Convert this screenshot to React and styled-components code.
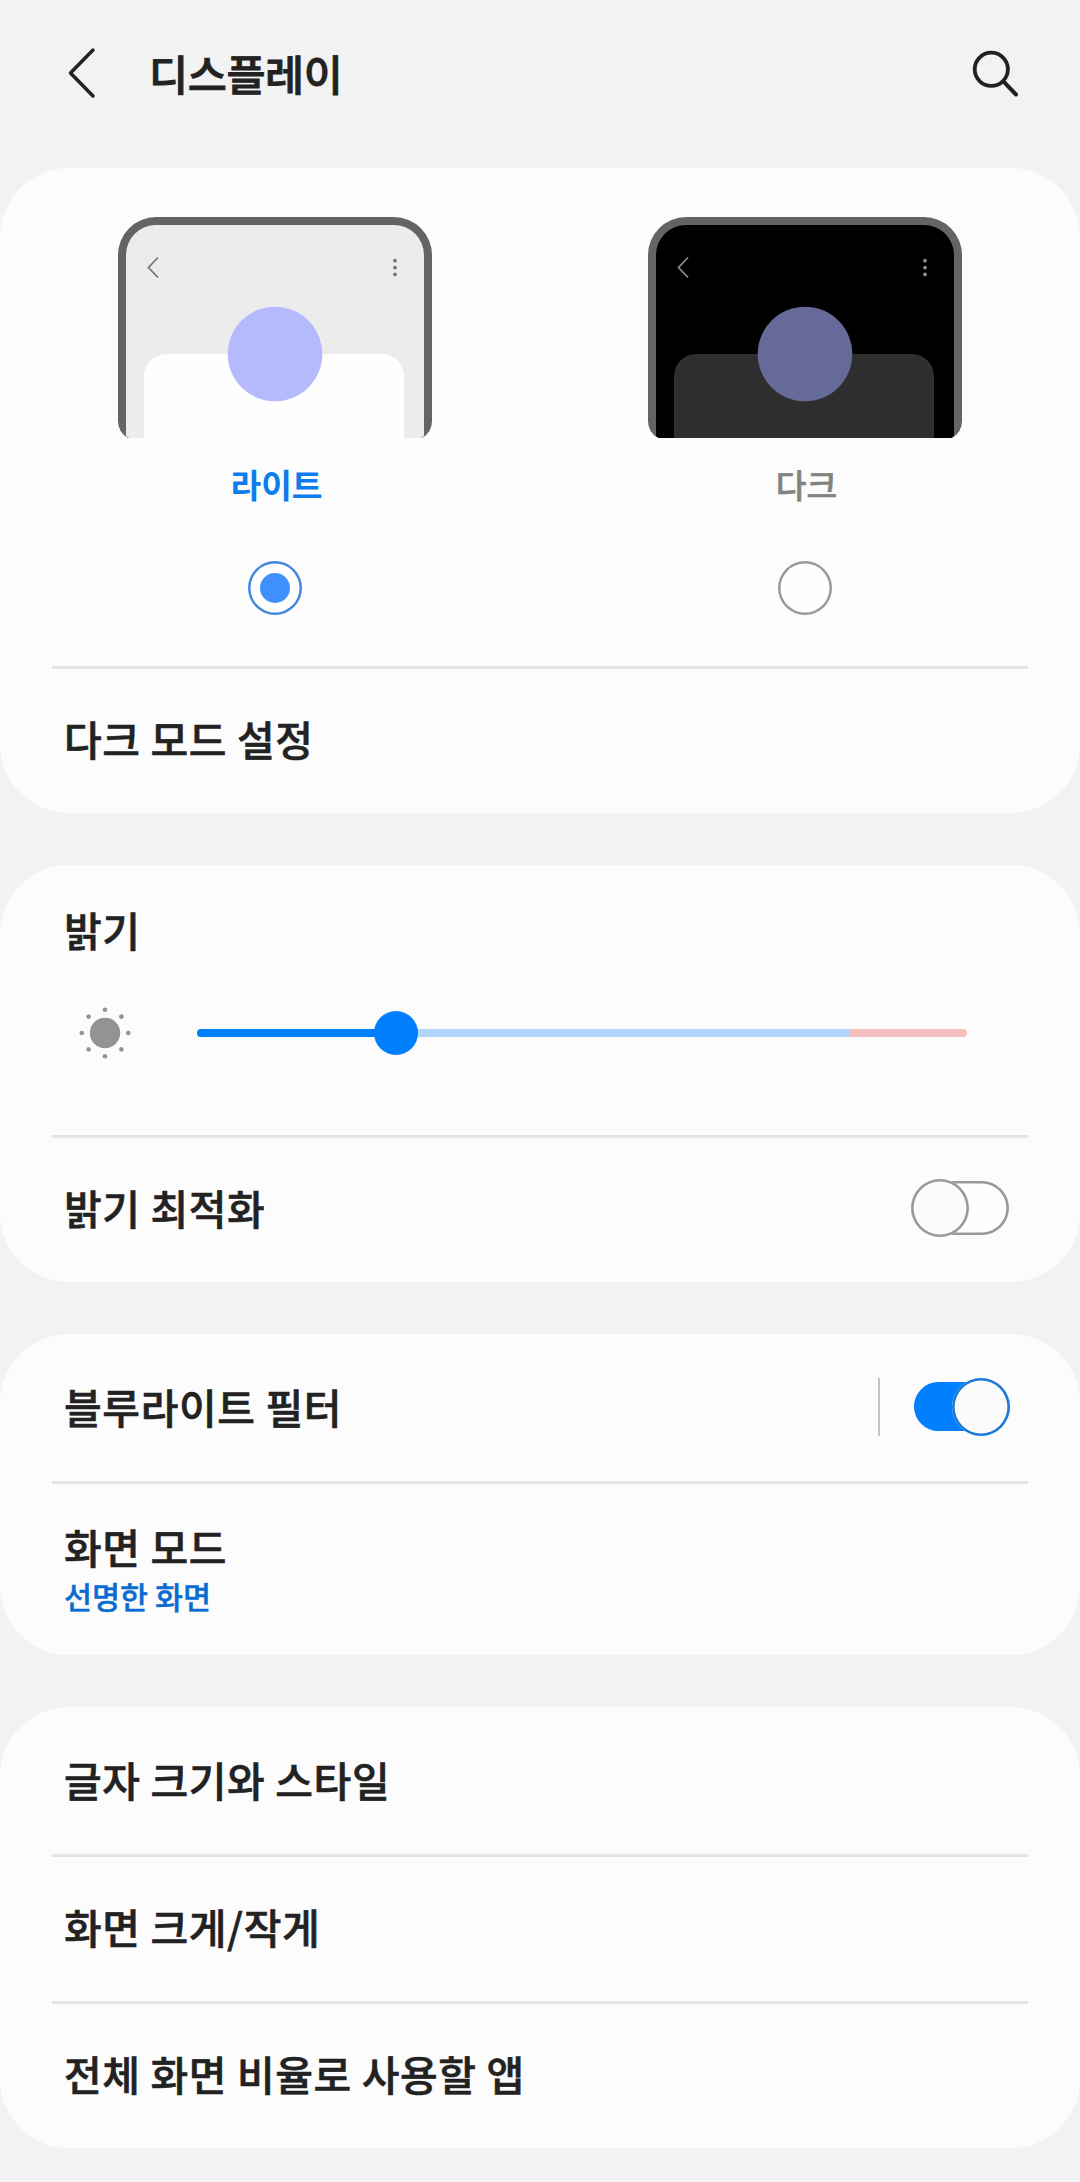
import React, { useState } from 'react';
import styled, { createGlobalStyle } from 'styled-components';

const Display = () => {
  const [theme, setTheme] = useState('light');
  const [adaptive, setAdaptive] = useState(false);
  const [blueLight, setBlueLight] = useState(true);
  const brightness = 199;

  return (
    <Wrapper>
      <GlobalStyle />
      <Header>
        <BackButton aria-label="back">
          <svg width="34" height="56" viewBox="0 0 34 56" fill="none">
            <path
              d="M28 5 L5.5 28 L28 51"
              stroke="#222"
              strokeWidth="3.5"
              strokeLinecap="round"
              strokeLinejoin="round"
            />
          </svg>
        </BackButton>
        <h1>디스플레이</h1>
        <SearchButton aria-label="search">
          <svg width="52" height="52" viewBox="0 0 52 52" fill="none">
            <circle cx="22.3" cy="22.3" r="16.6" stroke="#222" strokeWidth="3.8" />
            <path
              d="M34.4 34.4 L47 47.5"
              stroke="#222"
              strokeWidth="4"
              strokeLinecap="round"
            />
          </svg>
        </SearchButton>
      </Header>

      <Card>
        <Themes>
          <ThemeOption onClick={() => setTheme('light')}>
            <Preview screen="#ececec" panel="#fefefe" circle="#b4bafc" icon="#757575" />
            <ThemeName $active={theme === 'light'}>라이트</ThemeName>
            <Radio $active={theme === 'light'} />
          </ThemeOption>
          <ThemeOption onClick={() => setTheme('dark')}>
            <Preview screen="#000" panel="#2e2e2e" circle="#666a99" icon="#8c8c8c" />
            <ThemeName $active={theme === 'dark'}>다크</ThemeName>
            <Radio $active={theme === 'dark'} />
          </ThemeOption>
        </Themes>
        <Divider />
        <Row $height={144}>
          <Title>다크 모드 설정</Title>
        </Row>
      </Card>

      <Card>
        <Brightness>
          <Title>밝기</Title>
          <SliderRow>
            <SunIcon />
            <Slider>
              <Fill style={{ width: brightness }} />
              <Thumb style={{ left: brightness }} />
            </Slider>
          </SliderRow>
        </Brightness>
        <Divider />
        <Row $height={144}>
          <Title>밝기 최적화</Title>
          <Switch $on={adaptive} onClick={() => setAdaptive(!adaptive)} />
        </Row>
      </Card>

      <Card>
        <Row $height={147} $lift={2}>
          <Title>블루라이트 필터</Title>
          <Separator />
          <Switch $on={blueLight} onClick={() => setBlueLight(!blueLight)} />
        </Row>
        <Divider />
        <Row $height={171} $lift={8}>
          <div>
            <Title>화면 모드</Title>
            <Summary>선명한 화면</Summary>
          </div>
        </Row>
      </Card>

      <Card>
        <Row $height={147} $lift={1}>
          <Title>글자 크기와 스타일</Title>
        </Row>
        <Divider />
        <Row $height={144}>
          <Title>화면 크게/작게</Title>
        </Row>
        <Divider />
        <Row $height={144} $lift={5}>
          <Title>전체 화면 비율로 사용할 앱</Title>
        </Row>
      </Card>
    </Wrapper>
  );
};

const Preview = ({ screen, panel, circle, icon }) => (
  <svg width="314" height="221" viewBox="0 0 314 221">
    <path
      d="M0 38 A38 38 0 0 1 38 0 H276 A38 38 0 0 1 314 38 V204 Q314 215 304 221 H10 Q0 215 0 204 Z"
      fill="#646464"
    />
    <path
      d="M8 38 A30 30 0 0 1 38 8 H276 A30 30 0 0 1 306 38 V219 L303 221 H11 L8 219 Z"
      fill={screen}
    />
    <path d="M26 221 V159 A22 22 0 0 1 48 137 H264 A22 22 0 0 1 286 159 V221 Z" fill={panel} />
    <circle cx="157" cy="137" r="47.3" fill={circle} />
    <path d="M40 40.5 L30.5 50.5 L40 60.5" fill="none" stroke={icon} strokeWidth="1.8" />
    <g fill={icon}>
      <circle cx="277" cy="43.7" r="1.9" />
      <circle cx="277" cy="50.6" r="1.9" />
      <circle cx="277" cy="57.4" r="1.9" />
    </g>
  </svg>
);

const SunIcon = () => (
  <svg width="54" height="54" viewBox="0 0 54 54" fill="#939393">
    <circle cx="27" cy="27" r="15.2" />
    {[0, 45, 90, 135, 180, 225, 270, 315].map((angle) => (
      <circle key={angle} cx="27" cy="3.8" r="2.3" transform={`rotate(${angle} 27 27)`} />
    ))}
  </svg>
);

const GlobalStyle = createGlobalStyle`
  *,
  *::before,
  *::after {
    box-sizing: border-box;
  }
  body {
    margin: 0;
    background: #f2f2f2;
  }
`;

const Wrapper = styled.main`
  width: 1080px;
  height: 2182px;
  background: #f2f2f2;
  color: #222;
  font-family: 'Noto Sans CJK KR', sans-serif;
  button {
    padding: 0;
    border: 0;
    background: none;
    cursor: pointer;
  }
`;

const Header = styled.header`
  display: flex;
  align-items: center;
  height: 168px;
  padding: 0 59px 22px 65px;
  h1 {
    margin: 0;
    font-size: 42.5px;
    line-height: 60px;
    font-weight: 500;
    letter-spacing: -0.4px;
    -webkit-text-stroke: 0.9px #222;
  }
`;

const BackButton = styled.button`
  display: flex;
  margin-right: 50px;
`;

const SearchButton = styled.button`
  display: flex;
  margin-left: auto;
`;

const Card = styled.section`
  background: #fcfcfc;
  border-radius: 69px;
  margin-bottom: 52px;
`;

const Divider = styled.div`
  height: 3px;
  margin: 0 52px;
  background: #e5e5e5;
`;

const Row = styled.div`
  display: flex;
  align-items: center;
  height: ${({ $height }) => $height}px;
  padding: 0 70px ${({ $lift = 4 }) => $lift}px 64px;
`;

const Title = styled.div`
  font-size: 41px;
  line-height: 60px;
  font-weight: 500;
  letter-spacing: 0.6px;
  -webkit-text-stroke: 0.6px #222;
  margin-right: auto;
  padding-bottom: 2px;
`;

const Summary = styled.div`
  margin-top: -2px;
  font-size: 30.5px;
  line-height: 40px;
  font-weight: 500;
  color: #0a6cd0;
  -webkit-text-stroke: 0.4px #0a6cd0;
`;

const Themes = styled.div`
  display: flex;
  justify-content: space-between;
  height: 498px;
  padding: 49px 118px 0;
`;

const ThemeOption = styled.div`
  display: flex;
  flex-direction: column;
  align-items: center;
  width: 314px;
  cursor: pointer;
`;

const ThemeName = styled.div`
  margin-top: 23px;
  padding-left: 3px;
  font-size: 33.4px;
  line-height: 46px;
  font-weight: ${({ $active }) => ($active ? 700 : 500)};
  color: ${({ $active }) => ($active ? '#0f7cee' : '#828282')};
  -webkit-text-stroke: ${({ $active }) => ($active ? '0' : '0.5px #828282')};
`;

const Radio = styled.div`
  display: flex;
  align-items: center;
  justify-content: center;
  width: 54px;
  height: 54px;
  margin-top: 54px;
  border-radius: 50%;
  background: #fefefe;
  box-shadow: inset 0 0 0 2.5px ${({ $active }) => ($active ? '#4088dd' : '#999')};
  &::before {
    content: '';
    width: 30px;
    height: 30px;
    border-radius: 50%;
    background: ${({ $active }) => ($active ? '#3e90ff' : 'transparent')};
  }
`;

const Brightness = styled.div`
  height: 270px;
  padding: 34px 113px 0 64px;
`;

const SliderRow = styled.div`
  display: flex;
  align-items: center;
  margin-top: 45px;
  padding-left: 14px;
`;

const Slider = styled.div`
  position: relative;
  flex: 1;
  height: 8px;
  margin-left: 65px;
  border-radius: 4px;
  background: linear-gradient(to right, #b0d6fb 652px, #f4bfbd 652px);
`;

const Fill = styled.div`
  height: 8px;
  border-radius: 4px;
  background: #007fff;
`;

const Thumb = styled.div`
  position: absolute;
  top: -18px;
  width: 44px;
  height: 44px;
  margin-left: -22px;
  border-radius: 50%;
  background: #007fff;
`;

const Separator = styled.div`
  width: 2px;
  height: 58px;
  margin-right: 34px;
  background: #c4c4c4;
`;

const Switch = styled.div`
  position: relative;
  width: ${({ $on }) => ($on ? 96 : 98)}px;
  height: ${({ $on }) => ($on ? 49 : 54)}px;
  margin-right: ${({ $on }) => ($on ? 0 : 1)}px;
  border-radius: 27px;
  background: ${({ $on }) => ($on ? '#007fff' : '#fefefe')};
  box-shadow: ${({ $on }) => ($on ? 'none' : 'inset 0 0 0 2.6px #999')};
  cursor: pointer;
  &::after {
    content: '';
    position: absolute;
    top: 50%;
    left: ${({ $on }) => ($on ? 38 : 0)}px;
    width: 58px;
    height: 58px;
    margin-top: -29px;
    border-radius: 50%;
    background: #fbfbfb;
    box-shadow: inset 0 0 0 2.6px ${({ $on }) => ($on ? '#1a78d6' : '#999')};
  }
`;

export default Display;
